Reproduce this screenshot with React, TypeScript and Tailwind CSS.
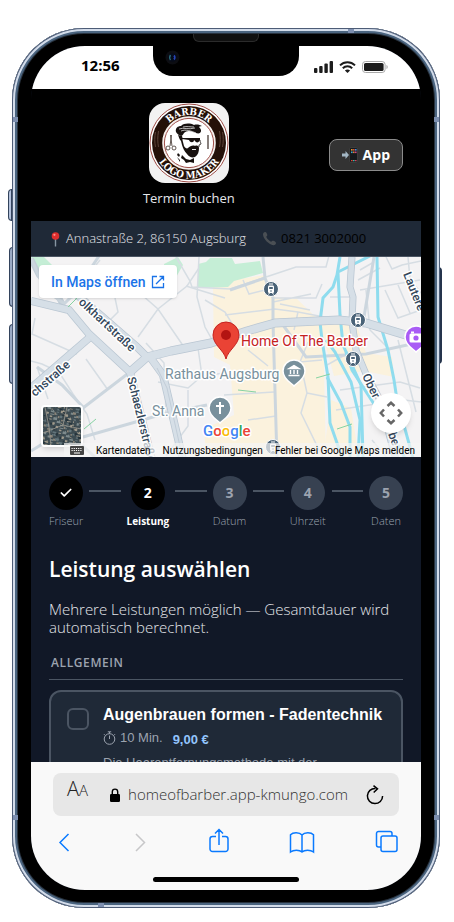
import { Fragment } from "react";
import type { ReactNode } from "react";
import { Check } from "lucide-react";

type StepState = "done" | "active" | "todo";

const steps: { label: string; state: StepState }[] = [
  { label: "Friseur", state: "done" },
  { label: "Leistung", state: "active" },
  { label: "Datum", state: "todo" },
  { label: "Uhrzeit", state: "todo" },
  { label: "Daten", state: "todo" },
];

function StatusBar() {
  return (
    <div className="relative flex h-[43px] shrink-0 items-center justify-between bg-white pb-1 pl-[50px] pr-[33px]">
      <span className="text-[15px] font-bold text-black">12:56</span>
      <div className="flex items-center gap-1.5 pt-0.5 text-[#1c1c1c]">
        <svg width="19" height="12" viewBox="0 0 19 12" fill="currentColor">
          <rect x="0" y="7" width="3.4" height="5" rx="1" />
          <rect x="5.2" y="5" width="3.4" height="7" rx="1" />
          <rect x="10.4" y="2.6" width="3.4" height="9.4" rx="1" />
          <rect x="15.6" y="0" width="3.4" height="12" rx="1" />
        </svg>
        <svg width="17" height="12" viewBox="0 0 17 12" fill="none" stroke="currentColor" strokeWidth="2">
          <path d="M1 4.4C5.2 .2 11.8 .2 16 4.4" />
          <path d="M3.8 7.2c2.7-2.6 6.7-2.6 9.4 0" />
          <path d="M8.5 12 5.9 9.5c1.5-1.3 3.7-1.3 5.2 0z" fill="currentColor" stroke="none" />
        </svg>
        <svg width="26" height="12" viewBox="0 0 26 12">
          <rect x=".5" y=".5" width="22.6" height="11" rx="3" fill="none" stroke="#a9a9a9" />
          <rect x="2" y="2" width="19.6" height="8" rx="1.6" fill="#1c1c1c" />
          <path d="M24.4 4v4c.9-.4 1.4-1.1 1.4-2s-.5-1.6-1.4-2z" fill="#b5b5b5" />
        </svg>
      </div>
    </div>
  );
}

function Notch() {
  return (
    <div className="absolute inset-x-0 top-1.5 flex justify-center">
      <div className="relative h-[42px] w-[146px] rounded-b-[20px] bg-black">
        <div className="mx-auto h-2 w-[66px] rounded-b-md border border-t-0 border-[#2b2b2b] bg-[#101010]" />
        <svg className="absolute left-3 top-4" width="15" height="15" viewBox="0 0 15 15">
          <circle cx="7.5" cy="7.5" r="7" fill="#0c0d12" />
          <circle cx="7.5" cy="7.5" r="4.2" fill="#050b1a" />
          <path d="M5.5 5c-1 1.5-1 3.5 0 5" stroke="#2b6a78" strokeWidth="1.4" fill="none" />
          <path d="M9 5.5c1 1 1 3 0 4" stroke="#2845b8" strokeWidth="1.8" fill="none" />
        </svg>
      </div>
    </div>
  );
}

function BarberLogo() {
  return (
    <svg className="rounded-2xl" width="80" height="80" viewBox="0 0 80 80" role="img" aria-label="Barber Logo Maker">
      <defs>
        <path id="arc-top" d="M12 40a28 28 0 0 1 56 0" />
        <path id="arc-bottom" d="M4.500 40a35.500 35.500 0 0 0 71 0" />
      </defs>
      <rect width="80" height="80" fill="#f2f2f2" />
      <circle cx="40" cy="40" r="39" fill="#fff" stroke="#9c4a44" strokeWidth="1" />
      <circle cx="40" cy="40" r="37" fill="#241008" />
      <circle cx="40" cy="40" r="26" fill="#fff" stroke="#f5efec" strokeWidth="1.600" />
      <circle cx="40" cy="40" r="24.600" fill="#fff" stroke="#9c4a44" strokeWidth="1" />
      <g fill="#fff" fontFamily="'DejaVu Serif Condensed', 'DejaVu Serif', serif" fontWeight="700" fontSize="10">
        <text textAnchor="middle">
          <textPath href="#arc-top" startOffset="50%">BARBER</textPath>
        </text>
        <text textAnchor="middle">
          <textPath href="#arc-bottom" startOffset="50%">LOGO MAKER</textPath>
        </text>
      </g>
      <g fill="none" stroke="#5b4238" strokeWidth="1">
        <path d="M6.500 29c-1 5-1 10 0 15M9.500 28c-1 6-1 11 0 16M73.500 29c1 5 1 10 0 15M70.500 28c1 6 1 11 0 16" />
      </g>
      {/* hair, glasses, beard, bow tie */}
      <g fill="#17110f">
        <path d="M27 29c-1-4 2-6 5-6 3-3 9-3 13-1 3-1 6 0 8 1-2 0-3 1-3 1 2 2 3 4 1 6-2 1-4 0-7-1-4-2-7-1-9 1-1 2-2 3-3 3-2-1-4-2-5-4z" />
        <path d="M29 32l4 1c1 2 0 4 1 6l1 4c1 2 3 3 4 2 2-2 5-3 7-2 2-1 4 0 4 2 0 4-1 7-4 9-3 1-6 0-8-3-3-3-4-6-5-9l-1-4c-2-2-2-4-3-6z" />
        <path d="M33 35h18v2c-1 3-4 3-5 1l-1-1c0 3-4 3-5 0l-7-1z" />
        <path d="M33 52l4 4 4 1 4-2v5l-4-1-4 1-2-3-3-2zM29 50l2 2-1 2-2-2zM28 54l3 3v2z" />
      </g>
      <path d="M30 26c5-2 9 1 16-1M32 28c5-2 10 0 15 2M34 24c4-1 7 0 11 0" stroke="#fff" strokeWidth=".7" fill="none" />
      <path d="M51 37c0 2 1 3 1 4l-2 1v2M43 46h4" stroke="#17110f" strokeWidth=".8" fill="none" />
      <path d="M43 46.500h4" stroke="#fff" strokeWidth=".9" />
      <g stroke="#3a2c26" strokeWidth=".8" fill="none">
        <path d="M21.500 32 23 43M22.500 32 21 43" />
        <circle cx="19" cy="45" r="2" />
        <circle cx="25" cy="45" r="2" />
      </g>
      <path d="M59 32v14" stroke="#3a2c26" strokeWidth="1.200" />
    </svg>
  );
}

function PhoneArrowIcon() {
  return (
    <svg width="16" height="16" viewBox="0 0 16 16">
      <path d="M0 6.500h3.500V4L7 8l-3.500 4V9.500H0z" fill="#a3b6c4" />
      <rect x="7.500" y=".5" width="8" height="15" rx="1.500" fill="#15191c" stroke="#4c4c4c" strokeWidth=".6" />
      <rect x="9" y="2" width="1.600" height="1.600" fill="#e0a030" />
      <rect x="11" y="2" width="1.600" height="1.600" fill="#d94a3a" />
      <rect x="13" y="2" width="1.600" height="1.600" fill="#3f8fe0" />
      <rect x="9" y="4.500" width="1.600" height="1.600" fill="#3fa7c9" />
      <rect x="11" y="4.500" width="1.600" height="1.600" fill="#e07b3a" />
      <rect x="13" y="4.500" width="1.600" height="1.600" fill="#c9468a" />
      <rect x="9" y="13" width="1.600" height="1.300" fill="#d94a3a" />
      <rect x="11" y="13" width="1.600" height="1.300" fill="#3fb7a9" />
      <rect x="13" y="13" width="1.600" height="1.300" fill="#c9465a" />
    </svg>
  );
}

function ShopHeader() {
  return (
    <header className="flex items-center bg-black px-[18px] py-3.5">
      <div className="flex flex-1 flex-col items-center gap-1.5">
        <BarberLogo />
        <p className="text-[13px] leading-[18px] text-[#e5e7eb]">Termin buchen</p>
      </div>
      <button className="flex h-8 items-center gap-[5px] rounded-lg border border-[#8b8b8b] bg-[#333] px-3 text-sm font-bold text-white">
        <PhoneArrowIcon />
        App
      </button>
    </header>
  );
}

function ContactBar() {
  return (
    <div className="flex h-9 items-center gap-4 border-b border-[#4b5563] bg-[#1f2937] px-[18px] text-[13px] font-light text-[#e5e7eb]">
      <span className="flex items-center gap-1">
        <svg width="13" height="16" viewBox="0 0 13 16">
          <path d="M6.500 7v8.500" stroke="#8796a3" strokeWidth="1.400" />
          <circle cx="6.500" cy="5" r="3.800" fill="#dd2e2e" />
          <circle cx="5.400" cy="3.800" r="1.100" fill="#ff8b85" />
        </svg>
        Annastraße 2, 86150 Augsburg
      </span>
      <a href="tel:08213002000" className="flex items-center gap-1 font-normal text-black">
        <svg width="15" height="15" viewBox="0 0 15 15" fill="#4a4f54">
          <path d="M1 3.500C1 1.800 2.200.7 3.300.9c1 .1 1.700 1.700 2 2.900.2.900-.3 1.300-1 1.800-.3 1.200 3.800 5.400 5 5.200.6-.7 1-1.200 1.900-1 1.200.3 2.700 1.200 2.800 2.200.1 1.200-1 2.300-2.700 2.200C7.300 14 1.200 7.800 1 3.500z" />
        </svg>
        0821 3002000
      </a>
    </div>
  );
}

function StationMarker({ x, y }: { x: number; y: number }) {
  return (
    <g transform={`translate(${x} ${y})`}>
      <circle r="7.500" fill="#4a6378" stroke="#fff" strokeWidth="1" />
      <rect x="-3" y="-3.500" width="6" height="7.500" rx="1.200" fill="#fff" />
      <rect x="-1.800" y="-2" width="3.600" height="2" fill="#4a6378" />
      <circle cy="2" r=".8" fill="#4a6378" />
      <path d="M-2-5h4M-2.500 5.500l1-1.500M2.500 5.500l-1-1.500" stroke="#fff" />
    </g>
  );
}

function PlaceMarker({ x, y, color, children }: { x: number; y: number; color: string; children: ReactNode }) {
  return (
    <g transform={`translate(${x} ${y})`}>
      <path
        d="M0 15C-2 12-11 9-11 0a11 11 0 0 1 22 0C11 9 2 12 0 15z"
        fill={color}
        stroke="#fff"
        strokeWidth="1.500"
      />
      {children}
    </g>
  );
}

const minorRoads = [
  "M35 318l-3 16 45 20",
  "M115 298l3 14-14 14",
  "M100 260l-16 20M142 295l16 14 26 38",
  "M138 337l20-28 29-23 12-18",
  "M176 257l14 24 2 6 38 2 33-11 33-11h30l4-15",
  "M186 286l39 12M199 257l-2 40 8 30 10 18",
  "M31 361l11 3 17 8 14 22 14 20 8 26",
  "M37 367l11 32M86 359l22 31M166 413l-2-50-18-20",
  "M198 348l4 28-14 12-30-6M202 376l30-4M188 390v36l-22 30",
  "M225 315l50-6 23 3 42 8M273 298h43l6-14M273 302l38-8",
  "M280 304l30 6M243 280l6 14 24-6M298 312l-4 18",
  "M205 300l20 12 12 20M224 395l50-3 M248 420l28-4M248 350l20 16",
  "M300 361l7 32-6 20 22 45M307 393l20 4M322 360l-22 2 8-20",
  "M360 270l14-8M358 280l22-12M360 290l60-10",
  "M386 257l6 12 10-4 19-4M385 290l13 28 23-8M398 285l12 28",
  "M366 290l4 40 18 18M398 340l18 72M340 390l60-8 20 6",
  "M345 355l-18 10M336 410l40-6M404 400l17 2M372 440l14 17",
  "M330 297h26M408 257l2 22 11 14",
];

const mediumRoads = [
  "M83 407l-21-22-25-18",
  "M83 437l84-24 40-8",
  "M31 451l34-21 30 27",
  "M63 305l12-12M130 372L83 408l-6 4",
  "M99 256l-28 42",
  "M263 257l2 21 8 20v24l4 138",
  "M31 258l14 32 20 14",
  "M230 290l35-12",
  "M283 325l23 32 60-3 55-12",
  "M374 257l-10 60",
];

const canals = [
  "M340 257l-3 18-4 12-10 11-3 24 2 18 6 37 2 46 14 40",
  "M338 273l2 42 3 30 18 40 2 72",
  "M326 340l9 12 16 30 9 38-2 37",
  "M327 377l14 26 9 24v32",
  "M338 272l32-16",
  "M377 257l1 60 10 33 6 30 3 20 16 58",
  "M346 352l6 18 22 34 18 30 14 26",
];

function MapDrawing() {
  return (
    <svg className="size-full" viewBox="31 257 390 200" preserveAspectRatio="xMidYMid slice" fill="none">
      <rect x="-200" y="257" width="900" height="200" fill="#f4f3f4" />
      <g fill="#fbf2dd">
        <path d="M213 287l20-7 32-5 10 22 22 2 26 25 3 133h-120l-2-28 30-14-4-50-16-8z" />
        <path d="M320 325l36-2 10 30 26 4 2 20-30-6-30 5z" />
        <path d="M331 400l20 8 8 50h-36z" />
      </g>
      <path d="M31 257h13l14 14 8 26-16-6-14-20z" fill="#c5eed6" />
      <path d="M164 264l14-7 5 8-8 14-10-4z" fill="#c5eed6" />
      <path d="M198 264l8-2 4-4h22l3 6 25-3 3 12-29 8-6 6-30 1z" fill="#c5eed6" />
      <path d="M31 259l8 16 14 12 10 18" stroke="#c3ced8" strokeWidth="6" />
      <g stroke="#d6dde3" strokeWidth="1.500">
        {minorRoads.map((d) => (
          <path key={d} d={d} />
        ))}
      </g>
      <g stroke="#ccd6de" strokeWidth="3">
        {mediumRoads.map((d) => (
          <path key={d} d={d} />
        ))}
      </g>
      <g stroke="#8fdcee" strokeWidth="3">
        {canals.map((d) => (
          <path key={d} d={d} />
        ))}
      </g>
      <g stroke="#b9c6d2" strokeWidth="8" strokeLinejoin="round">
        <path d="M31 301l38 9 20 24 41 38" />
        <path d="M31 388l58-50" />
        <path d="M75 293l62 54 12 12" />
        <path d="M130 372l17-15 24-6 40-8 36-12 28-8 64-3 27 3 56 17" strokeWidth="9" />
        <path d="M130 372l22 88" />
        <path d="M150 357l13 18 20 85" />
        <path d="M352 257l-2 30 3 10-1 25 4 28 10 24 14 26 16 60" strokeWidth="7" />
      </g>
      <g stroke="#d6dfe7" strokeWidth="6.500" strokeLinejoin="round">
        <path d="M31 301l38 9 20 24 41 38" />
        <path d="M31 388l58-50" />
        <path d="M75 293l62 54 12 12" />
        <path d="M130 372l17-15 24-6 40-8 36-12 28-8 64-3 27 3 56 17" strokeWidth="7.500" />
        <path d="M130 372l22 88" />
        <path d="M150 357l13 18 20 85" />
        <path d="M352 257l-2 30 3 10-1 25 4 28 10 24 14 26 16 60" strokeWidth="5.500" />
      </g>
      <path d="M157 368l10 20 16 72" stroke="#c2cdd8" />
      <path d="M68 307l12-12M238 390l18 2M316 378l14-4M337 429l15-5M84 429l12-10" stroke="#86d3a2" />

      <g fontFamily="Roboto, sans-serif" stroke="#fff" strokeWidth="3" strokeLinejoin="round" paintOrder="stroke">
        <g fill="#33475b" fontSize="12" fontWeight="500">
          <text transform="translate(78 303) rotate(43)">olkhartstraße</text>
          <text transform="translate(35 397) rotate(-41)">chstraße</text>
          <text transform="translate(127 378) rotate(76)">Schaezlerstraße</text>
          <text transform="translate(403 274) rotate(68)">Lautere</text>
          <text transform="translate(362 376) rotate(64)">Ober</text>
          <text transform="translate(388 434) rotate(70)">be</text>
        </g>
        <g fontSize="14">
          <text x="241" y="346" fill="#c5221f">Home Of The Barber</text>
          <text x="165" y="379" fill="#78909c">Rathaus Augsburg</text>
          <text x="152" y="416" fill="#78909c">St. Anna</text>
        </g>
        <text x="203" y="436" fontSize="15" fontWeight="500">
          <tspan fill="#4285f4">G</tspan>
          <tspan fill="#ea4335">o</tspan>
          <tspan fill="#fbbc04">o</tspan>
          <tspan fill="#4285f4">g</tspan>
          <tspan fill="#34a853">l</tspan>
          <tspan fill="#ea4335">e</tspan>
        </text>
      </g>

      <StationMarker x={271} y={289} />
      <StationMarker x={358} y={320} />
      <StationMarker x={353} y={359} />
      <StationMarker x={273} y={447} />
      <PlaceMarker x={294} y={371} color="#78909c">
        <path d="M-5-2.500 0-5.500 5-2.500zM-5.500 4.500h11M-3.500 3V-1M0 3V-1M3.500 3V-1" fill="#fff" stroke="#fff" strokeWidth="1.400" />
      </PlaceMarker>
      <PlaceMarker x={220} y={408} color="#78909c">
        <path d="M0-6V6M-4-2h8" stroke="#fff" strokeWidth="2" />
      </PlaceMarker>
      <PlaceMarker x={416} y={337} color="#a95cf5">
        <rect x="-6.500" y="-3.500" width="13" height="9" rx="1.500" fill="#fff" />
        <path d="M-5-4.500h3" stroke="#fff" strokeWidth="2" />
        <circle cy="1" r="2.600" fill="#a95cf5" />
      </PlaceMarker>
      <path d="M226 359c-2-9-13-14-13-24a13 13 0 0 1 26 0c0 10-11 15-13 24z" fill="#ea4335" stroke="#c5221f" />
      <circle cx="226" cy="335" r="5" fill="#b31412" />
    </svg>
  );
}

const roofColors = ["#7d8a8c", "#45545c", "#a09a8c", "#26343c", "#63757b", "#8c867a"];

function SatelliteThumb() {
  const roofs = Array.from({ length: 196 }, (_, i) => ({
    x: (i % 14) * 3 + ((i * 7) % 4) - 1,
    y: Math.floor(i / 14) * 3 + ((i * 5) % 3) - 1,
    w: 1 + ((i * 11) % 5) * 0.7,
    h: 1 + ((i * 13) % 4) * 0.5,
    fill: roofColors[(i * 17 + Math.floor(i / 5)) % roofColors.length],
  }));
  return (
    <svg className="size-full" viewBox="0 0 38 38">
      <rect width="38" height="38" fill="#3d4b51" />
      <g transform="rotate(12 19 19)">
        {roofs.map((r, i) => (
          <rect key={i} x={r.x} y={r.y} width={r.w} height={r.h} fill={r.fill} />
        ))}
      </g>
      <path d="M2 0l4 20 2 18M0 26l20-8 18 4M24 0l-4 18" stroke="#a09b90" strokeWidth=".8" fill="none" />
    </svg>
  );
}

function MapView() {
  return (
    <div className="relative h-[200px] overflow-hidden font-[Roboto,sans-serif]">
      <MapDrawing />
      <a
        href="#maps"
        className="absolute left-2 top-2 flex h-[33px] items-center gap-[5px] rounded-sm bg-white px-3 text-sm font-medium text-[#1a73e8] shadow"
      >
        In Maps öffnen
        <svg width="14" height="14" viewBox="0 0 14 14" fill="none" stroke="currentColor" strokeWidth="1.300">
          <path d="M6 1.500H1.500v11h11V8M8.500 1.500h4V5.500M12.500 1.500 5 9" />
        </svg>
      </a>
      <button
        aria-label="Satellitenbild"
        className="absolute bottom-2.5 left-2.5 size-[42px] overflow-hidden rounded-sm border-2 border-white shadow-md"
      >
        <SatelliteThumb />
      </button>
      <button
        aria-label="Kartenkamera"
        className="absolute bottom-6 right-2.5 flex size-10 items-center justify-center rounded-full bg-white shadow-md"
      >
        <svg width="24" height="24" viewBox="0 0 24 24" fill="none" stroke="#666" strokeWidth="2.500">
          <path d="M8.500 5 12 1.800 15.500 5M8.500 19l3.500 3.200 3.500-3.200M5 8.500 1.800 12 5 15.500M19 8.500l3.200 3.500-3.200 3.500" />
        </svg>
      </button>
      <div className="absolute bottom-0 right-0 flex h-3.5 items-center gap-3 bg-[#f5f5f5]/70 px-1.5 text-[10px] text-black">
        <svg width="14" height="9" viewBox="0 0 14 9">
          <rect width="14" height="9" rx="1" fill="#444" />
          <path d="M1.500 2.500h11M1.500 4.500h11" stroke="#fff" strokeDasharray="1.200 1" />
          <path d="M4 7h6" stroke="#fff" />
        </svg>
        <button>Kartendaten</button>
        <a href="#terms">Nutzungsbedingungen</a>
        <a href="#report">Fehler bei Google Maps melden</a>
      </div>
    </div>
  );
}

const circleStyles: Record<StepState, string> = {
  done: "bg-black text-white",
  active: "bg-black text-white",
  todo: "bg-[#374151] text-[#9ca3af]",
};

function Stepper() {
  return (
    <ol className="flex items-start">
      {steps.map((step, i) => (
        <Fragment key={step.label}>
          {i > 0 && <li aria-hidden="true" className="mx-1.5 mt-3.5 h-0.5 flex-1 bg-[#4b5563]" />}
          <li className="flex flex-col items-center gap-1">
            <span
              className={`flex size-[34px] items-center justify-center rounded-full text-sm font-bold ${circleStyles[step.state]}`}
            >
              {step.state === "done" ? <Check className="size-3.5" strokeWidth={3} /> : i + 1}
            </span>
            <span
              className={
                step.state === "active"
                  ? "text-[10px] leading-[14px] font-bold text-white"
                  : "text-[11px] leading-[14px] font-light text-[#9ca3af]"
              }
            >
              {step.label}
            </span>
          </li>
        </Fragment>
      ))}
    </ol>
  );
}

function ServiceCard() {
  return (
    <label className="mt-2.5 flex items-start gap-3.5 rounded-xl border-2 border-[#4b5563] bg-[#1f2937] px-4 pb-4 pt-3 font-['Liberation_Sans',Arial,sans-serif]">
      <input
        type="checkbox"
        className="mt-1 size-[22px] shrink-0 appearance-none rounded-md border-2 border-[#4b5563] bg-[#1f2937]"
      />
      <div>
        <h3 className="text-base leading-[22px] font-bold text-white">Augenbrauen formen - Fadentechnik</h3>
        <div className="flex items-end gap-2.5 text-[13px] leading-6 text-[#9ca3af]">
          <span className="flex items-center gap-1 pb-0.5">
            <svg width="13" height="14" viewBox="0 0 13 14" fill="none" stroke="currentColor">
              <circle cx="6.500" cy="8" r="5.300" />
              <path d="M4.800 .8h3.400M6.500 1v1.800M6.500 8V4.500M1 3.200l1.200 1.200M12 3.200l-1.200 1.200" />
            </svg>
            10 Min.
          </span>
          <span className="font-bold text-[#93c5fd]">9,00 €</span>
        </div>
        <p className="mt-0.5 text-[13px] leading-[18px] text-[#9ca3af]">Die Haarentfernungsmethode mit der</p>
      </div>
    </label>
  );
}

function BookingSection() {
  return (
    <main className="px-[18px] pt-[19px]">
      <Stepper />
      <h1 className="mt-[26px] text-[21px] leading-[30px] font-semibold text-white">Leistung auswählen</h1>
      <p className="mt-4 text-[15px] leading-[18px] font-light text-[#e5e7eb]">
        Mehrere Leistungen möglich — Gesamtdauer wird automatisch berechnet.
      </p>
      <h2 className="mt-[19px] border-b border-[#4b5563] px-0.5 pb-2 text-xs leading-4 font-semibold tracking-wider text-[#9ca3af] uppercase">
        Allgemein
      </h2>
      <ServiceCard />
    </main>
  );
}

function BrowserBar() {
  return (
    <div className="flex h-32 shrink-0 flex-col items-stretch bg-[#f9f9f9] px-[22px] pt-[11px]">
      <div className="flex h-[43px] items-center rounded-lg bg-[#e7e7e7] pl-3.5 pr-[15px] text-[#4f4f4f]">
        <button aria-label="Textgröße" className="flex items-baseline self-start pt-1 leading-6 font-light text-[#222]">
          <span className="text-xl leading-6">A</span>
          <span className="text-[15px] leading-6">A</span>
        </button>
        <div className="flex flex-1 items-center justify-center gap-2 pl-1">
          <svg width="10" height="14" viewBox="0 0 10 14">
            <path d="M2.300 7V3.800a2.700 2.700 0 0 1 5.400 0V7" fill="none" stroke="#000" strokeWidth="1.400" />
            <rect y="6" width="10" height="8" rx="1.200" fill="#000" />
          </svg>
          <span className="pb-0.5 text-[15px] leading-5 font-light text-[#333]">homeofbarber.app-kmungo.com</span>
        </div>
        <button aria-label="Neu laden">
          <svg width="18" height="20" viewBox="0 0 18 20" fill="none" stroke="#000" strokeWidth="1.500">
            <path d="M9.500 3.400A7.600 7.600 0 1 0 16.600 11" />
            <path d="M7.500 .6l4 3.300-3.800 3.600" />
          </svg>
        </button>
      </div>
      <nav className="flex items-center justify-between pl-1 pt-3 text-[#0a7aff]">
        <button aria-label="Zurück">
          <svg width="14" height="28" viewBox="0 0 14 28" fill="none" stroke="currentColor" strokeWidth="1.500">
            <path d="M11.500 6 3 14.500 11.500 23" />
          </svg>
        </button>
        <button aria-label="Vor" className="text-[#c7c7c9]">
          <svg width="18" height="28" viewBox="0 0 18 28" fill="none" stroke="currentColor" strokeWidth="1.500">
            <path d="M5 6l8.500 8.500L5 23" />
          </svg>
        </button>
        <button aria-label="Teilen">
          <svg width="20" height="28" viewBox="0 0 20 28" fill="none" stroke="currentColor" strokeWidth="1.500">
            <path d="M7 8.500H3.500A2.500 2.500 0 0 0 1 11v10a2.500 2.500 0 0 0 2.500 2.500h13A2.500 2.500 0 0 0 19 21V11a2.500 2.500 0 0 0-2.500-2.500H13M10 17V1.500M6 5.500l4-4 4 4" />
          </svg>
        </button>
        <button aria-label="Lesezeichen">
          <svg width="26" height="28" viewBox="0 0 26 28" fill="none" stroke="currentColor" strokeWidth="1.500">
            <path d="M13 7c-2.500-3-9-3-11.500-.3V24c3-2.500 9-2.500 11.500 0 2.500-2.500 8.500-2.500 11.500 0V6.700C22 4 15.500 4 13 7zv17" />
          </svg>
        </button>
        <button aria-label="Tabs">
          <svg width="24" height="28" viewBox="0 0 24 28" fill="none" stroke="currentColor" strokeWidth="1.500">
            <rect x="6" y="8" width="16" height="15.500" rx="2" />
            <path d="M6 19H3.500a2 2 0 0 1-2-2V5.500a2 2 0 0 1 2-2h11.500a2 2 0 0 1 2 2V8" />
          </svg>
        </button>
      </nav>
      <div className="mx-auto mb-2 mt-auto h-[5px] w-[146px] rounded-full bg-black" />
    </div>
  );
}

export default function App() {
  return (
    <div className="flex h-screen min-h-[600px] flex-col bg-white pb-3.5 pl-3 pr-3.5 pt-7 font-['Open_Sans','Noto_Sans',sans-serif]">
      <div className="relative flex min-h-0 flex-1 flex-col">
        {/* side buttons */}
        <span className="absolute -left-1 top-[161px] h-8 w-1 rounded-l-sm border border-[#33435c] bg-[#b4c2dc]" />
        <span className="absolute -left-[3px] top-[219px] h-[60px] w-1 rounded-l-sm border border-[#33435c] bg-[#9aaac4]" />
        <span className="absolute -left-[3px] top-[296px] h-[60px] w-1 rounded-l-sm border border-[#33435c] bg-[#9aaac4]" />
        <span className="absolute -right-[2px] top-[239px] h-[97px] w-1 rounded-r-sm bg-[#25344c]" />

        <div className="relative flex min-h-0 flex-1 flex-col rounded-[72px] bg-black px-[19px] py-[18px] shadow-[inset_0_0_0_1px_#4d5c76,inset_0_0_0_3px_#d3dcea,inset_0_0_0_5px_#4b6580,inset_0_0_0_6px_#28323e]">
          <div className="flex min-h-0 flex-1 flex-col overflow-hidden rounded-[54px] bg-[#111827]">
            <StatusBar />
            <div className="min-h-0 flex-1 overflow-hidden">
              <ShopHeader />
              <ContactBar />
              <MapView />
              <BookingSection />
            </div>
            <BrowserBar />
          </div>
          <Notch />
        </div>

        {/* antenna bands */}
        <span className="absolute left-px top-[89px] h-[5px] w-[5px] bg-[#7d8fb0]" />
        <span className="absolute right-px top-[89px] h-[5px] w-[5px] bg-[#7d8fb0]" />
        <span className="absolute bottom-[88px] left-px h-[5px] w-[5px] bg-[#7d8fb0]" />
        <span className="absolute bottom-[88px] right-px h-[5px] w-[5px] bg-[#7d8fb0]" />
        <span className="absolute right-[86px] top-px h-1 w-1.5 bg-[#7d8fb0]" />
        <span className="absolute bottom-px left-[86px] h-1 w-1.5 bg-[#7d8fb0]" />
      </div>
    </div>
  );
}
